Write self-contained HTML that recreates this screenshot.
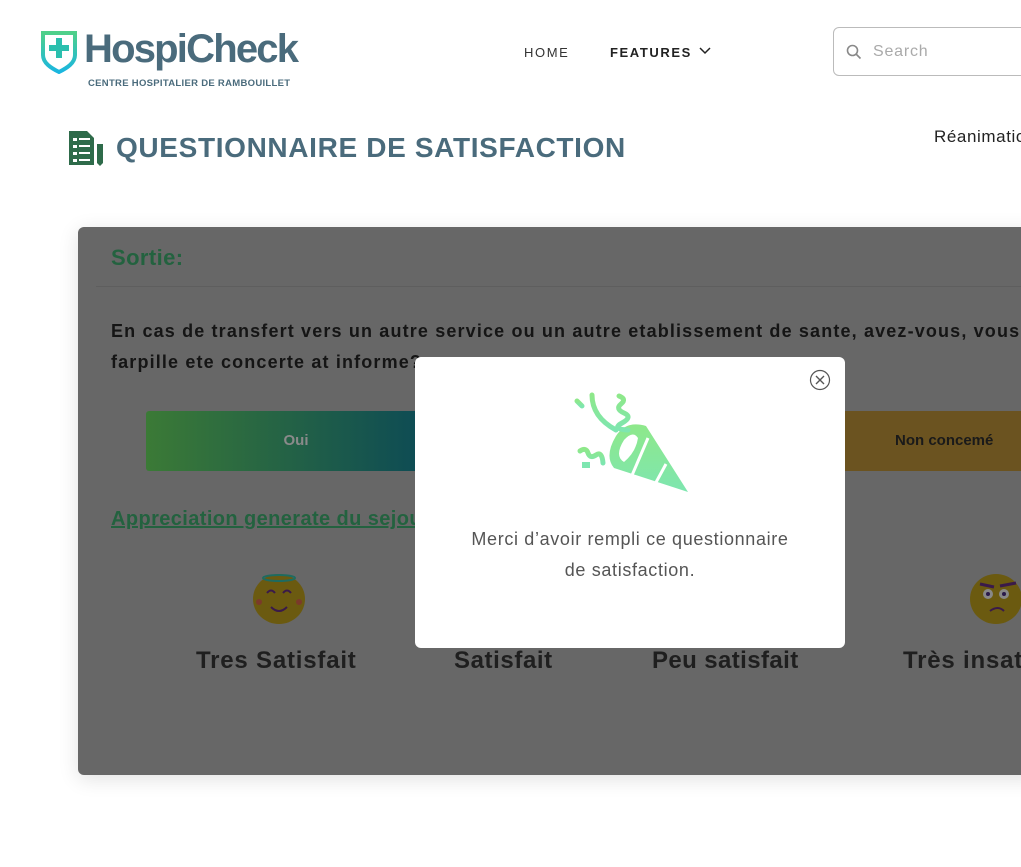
<!DOCTYPE html>
<html><head><meta charset="utf-8"><style>
*{margin:0;padding:0;box-sizing:border-box}
html,body{width:1021px;height:867px;overflow:hidden;background:#fff;font-family:"Liberation Sans",sans-serif;position:relative}
.a{position:absolute;white-space:nowrap}
</style></head><body>
<svg class="a" style="left:40px;top:30px" width="38" height="44" viewBox="0 0 38 44">
<defs><linearGradient id="lg" x1="0" y1="0" x2="0" y2="1"><stop offset="0" stop-color="#4fd08a"/><stop offset="1" stop-color="#1ab6e0"/></linearGradient></defs>
<path d="M3 3h32v22c0 8-8 13-16 17C11 38 3 33 3 25Z" fill="none" stroke="url(#lg)" stroke-width="4"/>
<rect x="16" y="8" width="6" height="20" fill="#2bbfae"/><rect x="9" y="15" width="20" height="6" fill="#2bbfae"/>
</svg>
<div class="a" style="left:84px;top:27px;font-size:40px;font-weight:bold;color:#4a6b7c;letter-spacing:-1.8px">HospiCheck</div>
<div class="a" style="left:88px;top:78px;font-size:9.5px;font-weight:bold;color:#4a6b7c;letter-spacing:0.3px">CENTRE HOSPITALIER DE RAMBOUILLET</div>
<div class="a" style="left:524px;top:45px;font-size:13px;color:#333;letter-spacing:1.6px">HOME</div>
<div class="a" style="left:610px;top:45px;font-size:13px;font-weight:bold;color:#222;letter-spacing:1.6px">FEATURES</div>
<svg class="a" style="left:699px;top:46px" width="12" height="9"><path d="M1 2l5 5 5-5" fill="none" stroke="#222" stroke-width="1.5"/></svg>
<div class="a" style="left:833px;top:27px;width:200px;height:49px;border:1px solid #bbb;border-radius:6px"></div>
<svg class="a" style="left:846px;top:44px" width="16" height="16"><circle cx="6.5" cy="6.5" r="5" fill="none" stroke="#888" stroke-width="1.6"/><path d="M10 10l4.5 4.5" stroke="#888" stroke-width="1.6"/></svg>
<div class="a" style="left:873px;top:43px;font-size:16px;color:#aaa;letter-spacing:0.8px">Search</div>
<svg class="a" style="left:68px;top:130px" width="36" height="36" viewBox="0 0 36 36">
<path d="M1 1h18l7 7v27H1Z" fill="#2e6b4a"/>
<g fill="#fff"><rect x="5" y="8" width="4" height="3"/><rect x="11" y="8" width="11" height="2"/><rect x="5" y="15" width="4" height="3"/><rect x="11" y="15" width="11" height="2"/><rect x="5" y="22" width="4" height="3"/><rect x="11" y="22" width="11" height="2"/><rect x="5" y="29" width="4" height="3"/><rect x="11" y="29" width="11" height="2"/></g>
<path d="M29 14h6v19l-3 3-3-3Z" fill="#2e6b4a"/></svg>
<div class="a" style="left:116px;top:132px;font-size:28px;font-weight:bold;color:#4a6b7c;letter-spacing:0.65px">QUESTIONNAIRE DE SATISFACTION</div>
<div class="a" style="left:934px;top:127px;font-size:17px;color:#222;letter-spacing:0.6px">Réanimation</div>
<div class="a" style="left:78px;top:227px;width:960px;height:548px;background:#676767;border-radius:6px;overflow:hidden;box-shadow:0 4px 20px rgba(0,0,0,.12)">
<div class="a" style="left:33px;top:18px;font-size:22px;font-weight:bold;color:#23623f;letter-spacing:0.4px">Sortie:</div>
<div class="a" style="left:18px;top:59px;width:940px;height:1px;background:#5e5e5e"></div>
<div class="a" style="left:33px;top:89px;font-size:18px;font-weight:bold;color:#151515;line-height:31px;letter-spacing:1.15px">En cas de transfert vers un autre service ou un autre etablissement de sante, avez-vous, vous<br>farpille ete concerte at informe?</div>
<div class="a" style="left:68px;top:184px;width:290px;height:60px;border-radius:3px;background:linear-gradient(90deg,#3b7a36,#0b4956)"></div>
<div class="a" style="left:68px;top:205px;width:300px;text-align:center;font-size:15px;font-weight:bold;color:#8a8a8a">Oui</div>
<div class="a" style="left:760px;top:184px;width:200px;height:60px;border-radius:3px;background:#6b5320"></div>
<div class="a" style="left:817px;top:205px;font-size:15px;font-weight:bold;color:#1a1a1a">Non concemé</div>
<div class="a" style="left:33px;top:281px;font-size:20px;font-weight:bold;color:#23623f;text-decoration:underline;letter-spacing:0.4px">Appreciation generate du sejour</div>
<svg class="a" style="left:173px;top:344px" width="56" height="56" viewBox="0 0 56 56"><ellipse cx="28" cy="28" rx="26" ry="25" fill="#6b5a10"/><ellipse cx="28" cy="7" rx="16" ry="3" fill="none" stroke="#1e6b60" stroke-width="2"/><path d="M16 22q4-5 8 0M32 22q4-5 8 0" stroke="#3a1a4a" stroke-width="2" fill="none"/><path d="M20 36q8 8 16 0" stroke="#3a1a4a" stroke-width="2" fill="none"/><circle cx="8" cy="31" r="3" fill="#7a3a2a"/><circle cx="48" cy="31" r="3" fill="#7a3a2a"/></svg>
<svg class="a" style="left:890px;top:344px" width="56" height="56" viewBox="0 0 56 56"><ellipse cx="28" cy="28" rx="26" ry="25" fill="#6b5a10"/><circle cx="20" cy="23" r="5" fill="#888"/><circle cx="36" cy="23" r="5" fill="#888"/><circle cx="20" cy="23" r="2" fill="#2a1a4a"/><circle cx="36" cy="23" r="2" fill="#2a1a4a"/><path d="M12 13l14 3M32 15l16-3" stroke="#3a1a4a" stroke-width="3"/><path d="M22 40q8-6 14 0" stroke="#3a1a4a" stroke-width="2" fill="none"/></svg>
<div class="a" style="left:118px;top:420px;font-size:24px;font-weight:bold;color:#1f1f1f;letter-spacing:0.8px">Tres Satisfait</div>
<div class="a" style="left:376px;top:420px;font-size:24px;font-weight:bold;color:#1f1f1f;letter-spacing:0.6px">Satisfait</div>
<div class="a" style="left:574px;top:420px;font-size:24px;font-weight:bold;color:#1f1f1f;letter-spacing:0.4px">Peu satisfait</div>
<div class="a" style="left:825px;top:420px;font-size:24px;font-weight:bold;color:#1f1f1f;letter-spacing:0.8px">Très insatisfait</div>
</div>
<div class="a" style="left:415px;top:357px;width:430px;height:291px;background:#fff;border-radius:6px"></div>
<svg class="a" style="left:809px;top:369px" width="22" height="22"><circle cx="11" cy="11" r="9.5" fill="none" stroke="#555" stroke-width="1.2"/><path d="M7 7l8 8M15 7l-8 8" stroke="#555" stroke-width="1.4"/></svg>
<svg class="a" style="left:572px;top:388px" width="118" height="108" viewBox="0 0 118 108">
<defs><linearGradient id="pg" x1="0" y1="0" x2="0" y2="1"><stop offset="0" stop-color="#8ee88a"/><stop offset="1" stop-color="#7ee6b0"/></linearGradient></defs>
<path d="M44 48q10-16 30-10l42 66-74-24q-10-12 2-32Z" fill="url(#pg)"/>
<path d="M52 52q9-10 14-2q-2 14-14 24q-10-6 0-22Z" fill="#fff"/>
<path d="M76 50l-18 42M94 76l-12 22" stroke="#fff" stroke-width="3"/>
<g fill="none" stroke="url(#pg)" stroke-width="5" stroke-linecap="round">
<path d="M20 7q0 22 24 35"/>
<path d="M47 8q8 3 2 8t3 9-2 10 6 7"/>
<path d="M8 63q6-4 8 2t8 2 7 8"/>
<path d="M5 13l5 5"/><path d="M73 10v4"/>
</g>
<rect x="10" y="74" width="8" height="6" fill="#7ee6b0"/>
</svg>
<div class="a" style="left:415px;top:524px;width:430px;text-align:center;font-size:18px;color:#555;line-height:31px;letter-spacing:0.65px">Merci d’avoir rempli ce questionnaire<br>de satisfaction.</div>
</body></html>
